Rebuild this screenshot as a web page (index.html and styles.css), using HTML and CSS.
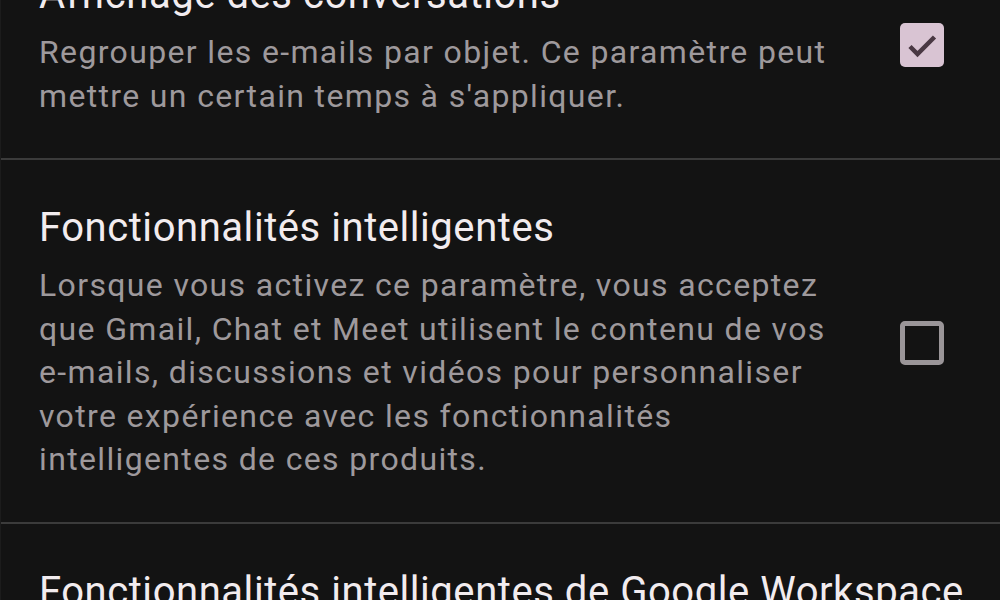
FILE: index.html
```html
<!DOCTYPE html>
<html lang="fr">
<head>
    <meta charset="UTF-8">
    <meta name="viewport" content="width=device-width, initial-scale=1.0">
    <title>Paramètres généraux</title>
    <link rel="stylesheet" href="styles.css">
</head>
<body>
    <div class="settings-list">
        <div class="setting-row first">
            <div class="setting-text">
                <h2>Affichage des conversations</h2>
                <p>Regrouper les e-mails par objet. Ce paramètre peut<br>mettre un certain temps à s'appliquer.</p>
            </div>
            <div class="checkbox checked">
                <svg viewBox="0 0 44 44" width="44" height="44">
                    <path d="M10 23.5l7.5 7.5L34.5 14" fill="none" stroke="#4a3843" stroke-width="4.5"/>
                </svg>
            </div>
        </div>

        <div class="setting-row">
            <div class="setting-text">
                <h2>Fonctionnalités intelligentes</h2>
                <p>Lorsque vous activez ce paramètre, vous acceptez<br>que Gmail, Chat et Meet utilisent le contenu de vos<br>e-mails, discussions et vidéos pour personnaliser<br>votre expérience avec les fonctionnalités<br>intelligentes de ces produits.</p>
            </div>
            <div class="checkbox"></div>
        </div>

        <div class="setting-row last">
            <div class="setting-text">
                <h2>Fonctionnalités intelligentes de Google Workspace</h2>
            </div>
        </div>
    </div>
</body>
</html>
```

FILE: styles.css
```css
body {
    margin: 0;
    padding: 0;
    background: #131313;
    font-family: 'Roboto', 'Noto Sans', sans-serif;
    overflow: hidden;
    height: 600px;
}

.settings-list {
    margin-top: -73px;
    border-left: 1px solid #1c1c1c;
}

.setting-row {
    display: flex;
    align-items: center;
    padding: 44px 0 40px 38px;
    border-bottom: 2px solid #3b3b3b;
}

.setting-row.last {
    border-bottom: none;
}

.setting-text {
    flex: 1;
}

.setting-text h2 {
    margin: 0 0 12px 0;
    font-size: 40px;
    line-height: 48px;
    font-weight: 400;
    letter-spacing: 0.55px;
    color: #f2ecef;
    white-space: nowrap;
}

.setting-text p {
    margin: 0;
    font-size: 32px;
    line-height: 43.5px;
    letter-spacing: 1.35px;
    color: #9e999c;
    white-space: nowrap;
}

.checkbox {
    width: 44px;
    height: 44px;
    box-sizing: border-box;
    border: 5px solid #9a9598;
    border-radius: 5px;
    margin-right: 56px;
    display: flex;
    align-items: center;
    justify-content: center;
}

.checkbox.checked {
    background: #d9c4d3;
    border: none;
}

.checkbox svg {
    display: block;
}
```
